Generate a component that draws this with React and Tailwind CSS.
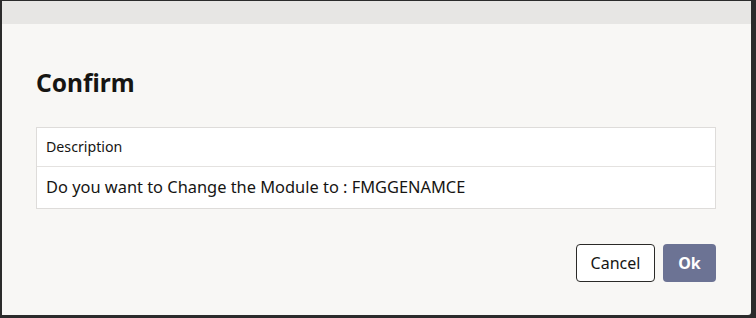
export default function App() {
  return (
    <div
      className="w-[756px] h-[318px] bg-[#2b2b2b] pt-px pl-[2px] pr-[5px] pb-[3px]"
      style={{ fontFamily: '"Noto Sans", "Open Sans", sans-serif' }}
    >
      <div className="w-full h-full bg-[#f8f7f5] rounded-br-[3px] flex flex-col">
        {/* textured strip from the page behind */}
        <div className="h-[23px] bg-[#e7e6e4]" />

        <div className="flex-1 flex flex-col pl-[34px] pr-[33px]">
          <h2 className="mt-[44px] text-[24.5px] leading-[30px] font-bold text-[#161513]">
            Confirm
          </h2>

          <div className="mt-[29px] mr-[2px] bg-white border border-[#dedcda]">
            <div className="h-[39px] px-[9px] flex items-center text-[14.2px] text-[#161513] border-b border-[#e4e2e0]">
              Description
            </div>
            <div className="h-[41px] px-[9px] flex items-center text-[16.4px] text-[#161513]">
              Do you want to Change the Module to : FMGGENAMCE
            </div>
          </div>

          <div className="mt-[35px] mr-[2px] flex justify-end gap-[8px]">
            <button className="w-[79px] h-[38px] bg-white border border-[#2b2a28] rounded-[4px] text-[16px] text-[#161513]">
              Cancel
            </button>
            <button className="w-[53px] h-[38px] bg-[#6c7394] rounded-[4px] text-[16px] font-bold text-white">
              Ok
            </button>
          </div>
        </div>
      </div>
    </div>
  );
}
